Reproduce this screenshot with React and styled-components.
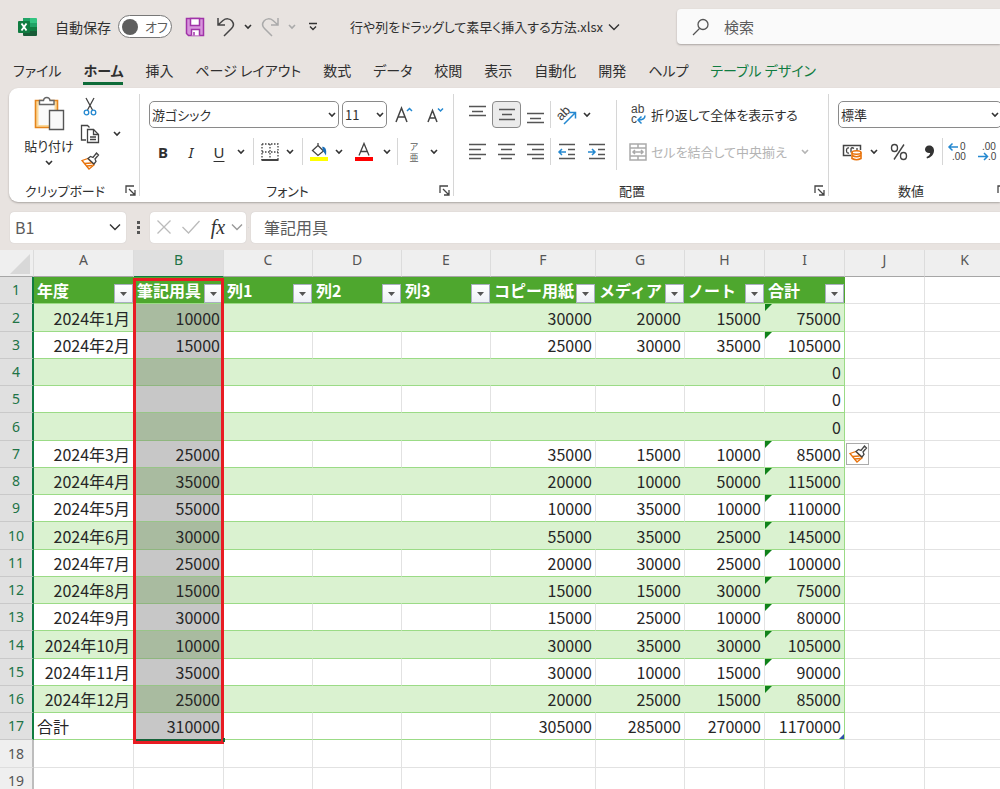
import React from "react";
import styled, { createGlobalStyle, css } from "styled-components";

const Colors = {
  chrome: "#e8e3e0",
  ink: "#303030",
  muted: "#5c5c5c",
  faint: "#b4b4b4",
  line: "#d6d6d6",
  excel: "#107c41",
  blue: "#2488d0",
  orange: "#e8730c",
  header: "#4ea72e",
  band: "#daf2d0",
  bandLine: "#9bdb86",
};

const GlobalStyle = createGlobalStyle`
  * {
    box-sizing: border-box;
  }

  body {
    margin: 0;
    background: ${Colors.chrome};
    color: ${Colors.ink};
    font-family: "Noto Sans CJK JP", sans-serif;
    font-size: 13px;
    overflow: hidden;
  }

  button, input, select {
    font: inherit;
    color: inherit;
    font-feature-settings: inherit;
  }

  svg {
    display: block;
    flex-shrink: 0;
    overflow: visible;
  }
`;

const Page = styled.div`
  height: 100vh;
  display: flex;
  flex-direction: column;
  overflow: hidden;
`;

/* ---------- title bar ---------- */

const TitleBar = styled.header`
  height: 53px;
  flex-shrink: 0;
  display: flex;
  align-items: center;
  padding-left: 18px;
  font-feature-settings: "palt";
`;

const AutoSave = styled.label`
  display: flex;
  align-items: center;
  gap: 7px;
  margin-left: 17px;
  font-size: 14px;
`;

const Toggle = styled.span`
  width: 54px;
  height: 23px;
  display: flex;
  align-items: center;
  gap: 7px;
  padding-left: 3px;
  border: 1px solid #777;
  border-radius: 12px;
  background: #fff;
  color: ${Colors.muted};
  font-size: 13px;
`;

const ToggleInput = styled.input`
  appearance: none;
  width: 16px;
  height: 16px;
  margin: 0;
  border-radius: 50%;
  background: #5e5e5e;
`;

const PlainButton = styled.button`
  display: inline-flex;
  align-items: center;
  justify-content: center;
  flex-shrink: 0;
  width: ${(props) => (props.$w ? `${props.$w}px` : "auto")};
  height: ${(props) => props.$h || 26}px;
  padding: 0;
  border: 0;
  border-radius: 4px;
  background: transparent;
  color: ${(props) => props.$color || "inherit"};
  white-space: nowrap;

  ${(props) => props.$active && css`
    border: 1px solid #8a8a8a;
    background: #ebebeb;
  `}
`;

const QuickTools = styled.div`
  display: flex;
  align-items: center;
  margin-left: 10px;
`;

const FileName = styled.button`
  display: flex;
  align-items: center;
  gap: 5px;
  margin-left: 20px;
  padding: 0;
  border: 0;
  background: transparent;
  font-size: 13px;
  white-space: nowrap;
`;

const SearchBox = styled.label`
  flex: 1;
  display: flex;
  align-items: center;
  gap: 14px;
  height: 35px;
  margin-left: 57px;
  padding-left: 15px;
  border-radius: 4px 0 0 4px;
  background: #fafafa;
  box-shadow: 0 1px 2px #aaa5a2;
`;

const BareInput = styled.input`
  flex: 1;
  min-width: 0;
  padding: 0;
  border: 0;
  outline: 0;
  background: transparent;
  font-size: ${(props) => props.$size || 15}px;
  color: ${Colors.muted};

  &::placeholder {
    color: ${Colors.muted};
    opacity: 1;
  }
`;

/* ---------- tabs ---------- */

const Tabs = styled.nav`
  height: 35px;
  flex-shrink: 0;
  display: flex;
  align-items: flex-start;
  gap: 22px;
  padding-left: 13px;
  font-feature-settings: "palt";
`;

const Tab = styled.button`
  height: 32px;
  padding: 5px 0 0;
  border: 0;
  border-bottom: 3px solid ${(props) => (props.$active ? "#0e6b38" : "transparent")};
  background: transparent;
  font-size: 14px;
  font-weight: ${(props) => (props.$active ? 700 : 400)};
  color: ${(props) => (props.$accent ? Colors.excel : Colors.ink)};
  white-space: nowrap;
`;

/* ---------- ribbon ---------- */

const Ribbon = styled.section`
  height: 114px;
  flex-shrink: 0;
  display: flex;
  margin-left: 9px;
  border-radius: 9px 0 0 9px;
  background: #fff;
  box-shadow: 0 1px 2px #a9a4a1;
  overflow: hidden;
  font-feature-settings: "palt";
`;

const Group = styled.div`
  width: ${(props) => props.$w}px;
  flex-shrink: 0;
  display: flex;
  flex-direction: column;
  padding: 6px 0 2px;
`;

const GroupBody = styled.div`
  flex: 1;
  display: flex;
  padding: 0 0 0 ${(props) => props.$pad || 9}px;
`;

const GroupFooter = styled.div`
  height: 20px;
  display: flex;
  align-items: center;

  & > span {
    flex: 1;
    text-align: center;
  }
`;

const Divider = styled.span`
  width: 1px;
  height: ${(props) => (props.$h ? `${props.$h}px` : "auto")};
  margin: ${(props) => props.$m || "0"};
  background: ${Colors.line};
  flex-shrink: 0;
`;

const Stack = styled.div`
  display: flex;
  flex-direction: column;
  gap: ${(props) => props.$gap || 0}px;
  padding-top: ${(props) => props.$top || 0}px;
`;

const Line = styled.div`
  display: flex;
  align-items: center;
  height: 27px;
  gap: ${(props) => props.$gap || 0}px;
`;

const PasteButton = styled.button`
  display: flex;
  flex-direction: column;
  align-items: center;
  gap: 4px;
  width: 54px;
  height: 78px;
  padding: 2px 0 0;
  border: 0;
  background: transparent;
  line-height: 20px;
`;

const SelectBox = styled.span`
  display: grid;
  align-items: center;
  width: ${(props) => props.$w}px;
  flex-shrink: 0;

  & > * {
    grid-area: 1 / 1;
  }

  & > svg {
    justify-self: end;
    margin-right: 3px;
    pointer-events: none;
  }
`;

const Select = styled.select`
  appearance: none;
  width: 100%;
  height: 27px;
  padding: 0 2px;
  border: 1px solid #8a8a8a;
  border-radius: 5px;
  background: #fff;
  font-size: 13px;
`;

const TextTool = styled.button`
  display: flex;
  align-items: center;
  gap: 4px;
  height: 27px;
  padding: 0;
  border: 0;
  background: transparent;
  color: ${(props) => (props.$off ? Colors.faint : "inherit")};
  white-space: nowrap;
`;

const Letter = styled.span`
  font-family: "Noto Sans", sans-serif;
  font-size: 15px;
  line-height: 20px;
  font-weight: ${(props) => (props.$bold ? 700 : 400)};
  font-style: ${(props) => (props.$italic ? "italic" : "normal")};
  text-decoration: ${(props) => (props.$underline ? "underline" : "none")};
  text-underline-offset: 3px;
`;

const Ruby = styled.span`
  display: flex;
  flex-direction: column;
  align-items: center;
  font-size: 9px;
  line-height: 11px;
  color: ${Colors.muted};
`;

/* ---------- formula bar ---------- */

const FormulaBar = styled.div`
  height: 48px;
  flex-shrink: 0;
  display: flex;
  align-items: center;
  padding: 2px 0 0 10px;
`;

const WhiteBox = styled.div`
  display: flex;
  align-items: center;
  width: ${(props) => (props.$w ? `${props.$w}px` : "auto")};
  flex: ${(props) => (props.$w ? "none" : 1)};
  height: 31px;
  padding: 0 ${(props) => props.$pad || 4}px;
  border-radius: ${(props) => (props.$w ? "4px" : "4px 0 0 4px")};
  background: #fff;
  box-shadow: 0 0 1px #b9b4b1;
`;

const Dots = styled.span`
  width: 24px;
  display: flex;
  flex-direction: column;
  align-items: center;
  gap: 2px;

  & > i {
    width: 3px;
    height: 3px;
    background: #555;
  }
`;

/* ---------- sheet ---------- */

const Sheet = styled.main`
  position: relative;
  flex: 1;
  min-height: 0;
  overflow: hidden;
  background: #fff;
`;

const Table = styled.table`
  width: 100%;
  table-layout: fixed;
  border-collapse: separate;
  border-spacing: 0;
  font-size: 16px;
  line-height: 22px;

  th, td {
    padding: 0;
    overflow: hidden;
    white-space: nowrap;
  }
`;

const ColHead = styled.th`
  height: 27px;
  border-right: 1px solid #dcdcdc;
  border-bottom: 1px solid ${(props) => (props.$on ? Colors.excel : "#a6a6a6")};
  background: ${(props) => (props.$on ? "#dfdfdf" : "#efefef")};
  color: ${(props) => (props.$on ? "#217346" : "#555")};
  font-family: "Noto Sans", sans-serif;
  font-size: 14px;
  font-weight: 400;
  line-height: 20px;
  vertical-align: top;
`;

const Row = styled.tr`
  height: 27px;

  &:nth-child(4n + 2) {
    height: 28px;
  }
`;

const RowHead = styled.th`
  border-right: 2px solid ${(props) => (props.$on ? Colors.excel : "#bdbdbd")};
  border-bottom: 1px solid ${(props) => (props.$on ? "#c9c9c9" : "#dedede")};
  background: ${(props) => (props.$on ? "#e0e0e0" : "#efefef")};
  color: ${(props) => (props.$on ? "#217346" : "#555")};
  font-family: "Noto Sans", sans-serif;
  font-size: 14px;
  font-weight: 400;
`;

const HeadCell = styled.th`
  background: ${Colors.header};
  border-bottom: 1px solid ${Colors.bandLine};
  color: #fff;
  font-weight: 700;
`;

const HeadInner = styled.div`
  display: flex;
  justify-content: space-between;
  align-items: flex-end;
  height: 26px;
  padding: 0 1px 0 3px;

  & > span {
    align-self: flex-start;
    line-height: 26px;
  }
`;

const FilterButton = styled.button`
  flex-shrink: 0;
  display: flex;
  align-items: center;
  justify-content: center;
  width: 19px;
  height: 19px;
  padding: 0;
  border: 1px solid #a9afbf;
  background: linear-gradient(#fff, #eef0f6);
`;

const Cell = styled.td`
  position: relative;
  text-align: ${(props) => (props.$left ? "left" : "right")};
  color: #262626;
  border-right: 1px solid #e2e2e2;
  border-bottom: 1px solid #e2e2e2;

  & > span {
    padding: 0 3px;
  }

  ${(props) => props.$table && css`
    border-bottom-color: ${Colors.bandLine};
  `}

  ${(props) => props.$band && css`
    background: ${Colors.band};
    border-right-color: ${Colors.band};
  `}

  ${(props) => props.$last && css`
    border-right-color: ${Colors.bandLine};
  `}

  ${(props) => props.$selected && css`
    background: ${props.$band ? "#a9bba0" : "#c7c7c7"};
    border-bottom-color: ${props.$band ? "#8fb67f" : "#98c488"};
  `}

  ${(props) => props.$flag && css`
    &::before {
      content: "";
      position: absolute;
      top: 0;
      left: 0;
      border-top: 7px solid #10821a;
      border-right: 7px solid transparent;
    }
  `}

  ${(props) => props.$corner && css`
    &::after {
      content: "";
      position: absolute;
      right: 0;
      bottom: 0;
      border-bottom: 5px solid #2f4fa8;
      border-left: 5px solid transparent;
    }
  `}
`;

const PasteOptions = styled.button`
  display: flex;
  align-items: center;
  justify-content: center;
  width: 23px;
  height: 22px;
  margin-left: 1px;
  padding: 0;
  border: 1px solid #ababab;
  background: #fff;
`;

/* frame laid over column B, rows 1 to 17 */
const Highlight = styled.div`
  position: absolute;
  left: 133px;
  top: 28px;
  width: 91px;
  height: 466px;
  border: 3px solid #e81c23;
  box-shadow: inset 0 -2px 0 #17633a;
  pointer-events: none;

  &::after {
    content: "";
    position: absolute;
    right: -4px;
    bottom: -1px;
    width: 2px;
    height: 4px;
    background: #17633a;
  }
`;

/* ---------- icons ---------- */

function Svg({ w = 20, h = 20, color = "#444", sw = 1.3, children }) {
  return (
    <svg width={w} height={h} viewBox={`0 0 ${w} ${h}`} fill="none" stroke={color} strokeWidth={sw} aria-hidden="true">
      {children}
    </svg>
  );
}

const Glyphs = styled.text`
  fill: #444;
  stroke: none;
  font-family: "Liberation Sans", sans-serif;
  font-size: ${(props) => props.$size}px;
`;

const Chevron = ({ color = "#333", big }) =>
  big ? (
    <Svg w={12} h={8} color={color} sw={1.4}><path d="M1 1.5l5 5 5-5" /></Svg>
  ) : (
    <Svg w={8} h={6} color={color} sw={1.6}><path d="M1 1l3 3 3-3" /></Svg>
  );

const ExcelIcon = () => (
  <Svg w={20} h={20} sw={0}>
    <path d="M5 1h7v5H5z" fill="#21a366" />
    <path d="M12 1h6q1 0 1 1v4h-7z" fill="#33c481" />
    <path d="M5 6h7v8H5z" fill="#107c41" />
    <path d="M12 6h7v4h-7z" fill="#21a366" />
    <path d="M12 10h7v4h-7z" fill="#107c41" />
    <path d="M5 14h14v4q0 1-1 1H6q-1 0-1-1z" fill="#185c37" />
    <rect x="0" y="4" width="12" height="12" rx="1" fill="#107c41" />
    <path d="M3.500 6.500l5 7M8.500 6.500l-5 7" stroke="#fff" strokeWidth="1.900" />
  </Svg>
);

const SaveIcon = () => (
  <Svg w={20} h={20} color="#a033a8" sw={1.5}>
    <path d="M1.500 1.500h17v17h-15l-2-2z" fill="#d795dc" />
    <path d="M5.500 1.500h9v7h-9z" fill="#fff" />
    <path d="M6.500 18.500v-6h8v6" fill="#fff" />
    <path d="M9 15v3.500" />
  </Svg>
);

const UndoIcon = () => (
  <Svg w={20} h={20} color="#444" sw={1.5}>
    <path d="M2 1v7h7M2.500 7.500L7 3.500c3-2.500 7-2 9 .5s1.500 5.500-.5 7.500L8 19" />
  </Svg>
);

const RedoIcon = () => (
  <Svg w={20} h={20} color="#aaa" sw={1.5}>
    <path d="M18 1v7h-7M17.500 7.500L13 3.500c-3-2.500-7-2-9 .5s-1.500 5.500.5 7.500L12 19" />
  </Svg>
);

const MoreIcon = () => (
  <Svg w={10} h={10} color="#333" sw={1.4}><path d="M1 1.500h8M2 4.500l3 3 3-3" /></Svg>
);

const SearchIcon = () => (
  <Svg w={18} h={18} color="#555" sw={1.3}>
    <circle cx="11" cy="6.500" r="5" /><path d="M7.500 10.500L1 17" />
  </Svg>
);

const LaunchIcon = () => (
  <Svg w={11} h={11} color="#444" sw={1.3}>
    <path d="M1 8V1h8M4 4l5.500 5.500M10 5v5H5" />
  </Svg>
);

const PasteIcon = () => (
  <Svg w={32} h={36} sw={1.4}>
    <path d="M2.500 4.500h22v27h-22z" stroke="#e5851c" strokeWidth="1.600" fill="#fbd99a" />
    <path d="M5.500 8h16v21h-16z" fill="#fafafa" stroke="none" />
    <path d="M6.500 8.500v-4h4c.5-4 6-4 6.500 0h4v4z" fill="#fff" stroke="#666" />
    <path d="M16.500 14.500h14v19h-14z" fill="#f8f8f8" stroke="#555" />
  </Svg>
);

const CutIcon = () => (
  <Svg w={14} h={18}>
    <path d="M3 0l6.500 12M11 0L4.500 12" />
    <circle cx="3.500" cy="14.500" r="2.300" stroke={Colors.blue} />
    <circle cx="10.500" cy="14.500" r="2.300" stroke={Colors.blue} />
  </Svg>
);

const CopyIcon = () => (
  <Svg w={20} h={20}>
    <path d="M6 16H1.500V1.500h6l2 2" />
    <path d="M7.500 5.500h6l5 5v8h-11z" fill="#fff" />
    <path d="M13.500 5.500v5h5M10 13h6M10 15.500h6" />
  </Svg>
);

const BrushIcon = () => (
  <Svg w={18} h={18}>
    <path d="M1 8.500l6-2 6 6.500-5 4z" stroke={Colors.orange} fill="#fff" />
    <path d="M3.500 11.500l7-.5M5.500 14l6-.5" stroke={Colors.orange} />
    <path d="M7 6.500l2.500-2 2.500 1L15.500 1l2 2L14 7l1 2.500-2 2.500z" fill="#fff" />
  </Svg>
);

const BordersIcon = () => (
  <Svg w={18} h={18}>
    <path d="M1 1h16v16M1 1v16M9 1v16M1 9h16" strokeDasharray="1.500 1.500" />
    <path d="M.5 17h17" strokeWidth="2" />
  </Svg>
);

const FillIcon = () => (
  <Svg w={20} h={20}>
    <path d="M8.500 3l6 6-5.500 4.500L3.500 8.500 9 3.500V1" />
    <path d="M14 5.500q3 .5 2.500 6l-2-3z" fill="#1b6fb8" stroke="#1b6fb8" />
    <path d="M1 15h18v4H1z" fill="#ff0" stroke="none" />
  </Svg>
);

const FontColorIcon = () => (
  <Svg w={20} h={20}>
    <path d="M5 13.500l5-12 5 12M6.500 9.500h7" />
    <path d="M1 15h18v4H1z" fill="#f00" stroke="none" />
  </Svg>
);

const GrowIcon = () => (
  <Svg w={18} h={18} sw={1.5}>
    <path d="M1 16L6.500 2 12 16M3 11h7" /><path d="M12 5l2.500-2.500L17 5" stroke={Colors.blue} />
  </Svg>
);

const ShrinkIcon = () => (
  <Svg w={18} h={18} sw={1.5}>
    <path d="M2 16L6.500 4.500 11 16M4 12h5" /><path d="M12 2.500L14.500 5 17 2.500" stroke={Colors.blue} />
  </Svg>
);

// each line is [x1, x2, y]
const LinesIcon = ({ lines, children }) => (
  <Svg w={18} h={18} color="#555" sw={1.5}>
    {lines.map(([a, b, y]) => <path key={y} d={`M${a} ${y}.500H${b}`} />)}
    {children}
  </Svg>
);

const OrientIcon = () => (
  <Svg w={20} h={20}>
    <Glyphs x="0" y="13" transform="rotate(-45 6 10)" $size={13}>ab</Glyphs>
    <path d="M7 19L18 8M12.500 7.500H18.500V13.500" stroke={Colors.blue} strokeWidth="1.500" />
  </Svg>
);

const WrapIcon = () => (
  <Svg w={18} h={20}>
    <Glyphs x="2" y="8" $size={12}>ab</Glyphs>
    <Glyphs x="2" y="18" $size={12}>c</Glyphs>
    <path d="M16 10.500q0 4.500-7 4.500M12.500 11.500L9 15l3.500 3.500" stroke={Colors.blue} strokeWidth="1.500" />
  </Svg>
);

const MergeIcon = () => (
  <Svg w={18} h={18} color="#aaa" sw={1.5}>
    <path d="M1 1h16v16H1zM1 5h16M1 13h16M9 1v4M9 13v4M4 9h10M6 7L4 9l2 2M12 7l2 2-2 2" />
  </Svg>
);

const CurrencyIcon = () => (
  <Svg w={20} h={18}>
    <path d="M9 12.500H1.500v-10h17V7" strokeWidth="1.500" />
    <path d="M7 5q-2.500-.5-2.500 2.500T7 10M12 5.500q-2-1.500-3 0v4M15 8V5" />
    <path d="M10 9.500v6q4.500 2.500 9 0v-6" fill="#fff" stroke={Colors.orange} strokeWidth="1.600" />
    <ellipse cx="14.500" cy="9.500" rx="4.500" ry="1.700" fill="#fff" stroke={Colors.orange} strokeWidth="1.600" />
    <path d="M10 12.500q4.500 2.500 9 0" stroke={Colors.orange} strokeWidth="1.600" />
  </Svg>
);

const PercentIcon = () => (
  <Svg w={18} h={18} sw={1.4}>
    <ellipse cx="4.500" cy="5" rx="3" ry="3.500" /><ellipse cx="13.500" cy="13" rx="3" ry="3.500" />
    <path d="M14 1.500L4 16.500" />
  </Svg>
);

const CommaIcon = () => (
  <Svg w={12} h={18} sw={0}>
    <path d="M6 2.500c3 0 5 2 5 5 0 4-3 7-7 8l-.5-1.500c2-.7 3.500-2 3.700-4C4.500 10.500 2 9 2 6.500c0-2.300 1.700-4 4-4z" fill="#333" />
  </Svg>
);

const DecimalIcon = ({ less }) => (
  <Svg w={20} h={20}>
    <Glyphs x={less ? 4 : 12} y="8" $size={10}>{less ? ".00" : "0"}</Glyphs>
    <Glyphs x={less ? 10 : 4} y="18" $size={10}>{less ? ".0" : ".00"}</Glyphs>
    <path
      d={less ? "M0 14.500h9.500M6 11l3.500 3.500L6 18" : "M10 5H1M4.500 1.500L1 5l3.500 3.500"}
      stroke={Colors.blue}
      strokeWidth="1.500"
    />
  </Svg>
);

const FxText = styled.span`
  font-family: "Liberation Serif", serif;
  font-size: 20px;
  font-style: italic;
  line-height: 24px;
  color: #333;
`;

/* ---------- data ---------- */

const tabs = ["ファイル", "ホーム", "挿入", "ページ レイアウト", "数式", "データ", "校閲", "表示", "自動化", "開発", "ヘルプ", "テーブル デザイン"];

const columns = [
  ["A", 100, "年度"],
  ["B", 90, "筆記用具"],
  ["C", 89, "列1"],
  ["D", 89, "列2"],
  ["E", 89, "列3"],
  ["F", 105, "コピー用紙"],
  ["G", 89, "メディア"],
  ["H", 80, "ノート"],
  ["I", 80, "合計"],
  ["J", 80],
  ["K", 80],
];

const entry = (label, b, f, g, h, total) => [label, b, "", "", "", f, g, h, total];
const empty = entry("", "", "", "", "", 0);

const rows = [
  entry("2024年1月", 10000, 30000, 20000, 15000, 75000),
  entry("2024年2月", 15000, 25000, 30000, 35000, 105000),
  empty,
  empty,
  empty,
  entry("2024年3月", 25000, 35000, 15000, 10000, 85000),
  entry("2024年4月", 35000, 20000, 10000, 50000, 115000),
  entry("2024年5月", 55000, 10000, 35000, 10000, 110000),
  entry("2024年6月", 30000, 55000, 35000, 25000, 145000),
  entry("2024年7月", 25000, 20000, 30000, 25000, 100000),
  entry("2024年8月", 15000, 15000, 15000, 30000, 75000),
  entry("2024年9月", 30000, 15000, 25000, 10000, 80000),
  entry("2024年10月", 10000, 30000, 35000, 30000, 105000),
  entry("2024年11月", 35000, 30000, 10000, 15000, 90000),
  entry("2024年12月", 25000, 20000, 25000, 15000, 85000),
  entry("合計", 310000, 305000, 285000, 270000, 1170000),
];

/* ---------- parts ---------- */

function Tool({ label, children, ...rest }) {
  return <PlainButton type="button" aria-label={label} {...rest}>{children}</PlainButton>;
}

function More({ label, w = 16, color }) {
  return <Tool label={label} $w={w}><Chevron color={color} /></Tool>;
}

function Dropdown({ label, value, w }) {
  return (
    <SelectBox $w={w}>
      <Select aria-label={label} defaultValue={value}>
        <option>{value}</option>
      </Select>
      <Chevron />
    </SelectBox>
  );
}

function Footer({ title }) {
  return (
    <GroupFooter>
      <span>{title}</span>
      <Tool label={`${title}の設定`} $w={18} $h={18}><LaunchIcon /></Tool>
    </GroupFooter>
  );
}

function TopBar() {
  return (
    <TitleBar>
      <ExcelIcon />
      <AutoSave>
        自動保存
        <Toggle>
          <ToggleInput type="checkbox" role="switch" />
          オフ
        </Toggle>
      </AutoSave>
      <QuickTools>
        <Tool label="上書き保存" $w={26}><SaveIcon /></Tool>
        <Tool label="元に戻す" $w={36}><UndoIcon /></Tool>
        <More label="元に戻す履歴" w={8} />
        <Tool label="やり直し" $w={36}><RedoIcon /></Tool>
        <More label="やり直し履歴" w={8} color="#aaa" />
        <Tool label="クイック アクセスのカスタマイズ" $w={34}><MoreIcon /></Tool>
      </QuickTools>
      <FileName type="button">
        行や列をドラッグして素早く挿入する方法.xlsx
        <Chevron big />
      </FileName>
      <SearchBox>
        <SearchIcon />
        <BareInput type="text" placeholder="検索" aria-label="検索" />
      </SearchBox>
    </TitleBar>
  );
}

function ClipboardGroup() {
  return (
    <Group $w={130}>
      <GroupBody $pad={13}>
        <PasteButton type="button">
          <PasteIcon />
          貼り付け
          <Chevron />
        </PasteButton>
        <Stack>
          <Tool label="切り取り" $w={28} $h={26}><CutIcon /></Tool>
          <Line>
            <Tool label="コピー" $w={28}><CopyIcon /></Tool>
            <More label="コピーのオプション" w={26} />
          </Line>
          <Tool label="書式のコピー" $w={28} $h={28}><BrushIcon /></Tool>
        </Stack>
      </GroupBody>
      <Footer title="クリップボード" />
    </Group>
  );
}

function FontGroup() {
  return (
    <Group $w={313}>
      <GroupBody>
        <Stack $gap={10} $top={7}>
          <Line $gap={3}>
            <Dropdown label="フォント" value="游ゴシック" w={190} />
            <Dropdown label="フォント サイズ" value="11" w={45} />
            <Tool label="フォント サイズの拡大" $w={28}><GrowIcon /></Tool>
            <Tool label="フォント サイズの縮小" $w={28}><ShrinkIcon /></Tool>
          </Line>
          <Line>
            <Tool label="太字" $w={28}><Letter $bold>B</Letter></Tool>
            <Tool label="斜体" $w={28}><Letter $italic>I</Letter></Tool>
            <Tool label="下線" $w={28}><Letter $underline>U</Letter></Tool>
            <More label="下線のオプション" />
            <Divider $h={27} $m="0 4px" />
            <Tool label="罫線" $w={24}><BordersIcon /></Tool>
            <More label="罫線のオプション" />
            <Divider $h={27} $m="0 4px" />
            <Tool label="塗りつぶしの色" $w={24}><FillIcon /></Tool>
            <More label="塗りつぶしのオプション" />
            <Tool label="フォントの色" $w={34}><FontColorIcon /></Tool>
            <More label="フォントの色のオプション" w={12} />
            <Divider $h={27} $m="0 4px" />
            <Tool label="ふりがな" $w={24}><Ruby><span>ア</span><span>亜</span></Ruby></Tool>
            <More label="ふりがなのオプション" />
          </Line>
        </Stack>
      </GroupBody>
      <Footer title="フォント" />
    </Group>
  );
}

function AlignGroup() {
  return (
    <Group $w={374}>
      <GroupBody>
        <Stack $gap={10} $top={7}>
          <Line>
            <Tool label="上揃え" $w={29}><LinesIcon lines={[[0, 17, 0], [3, 14, 5], [0, 17, 9]]} /></Tool>
            <Tool label="上下中央揃え" $w={29} $h={27} $active><LinesIcon lines={[[1, 17, 3], [4, 14, 8], [1, 17, 13]]} /></Tool>
            <Tool label="下揃え" $w={29}><LinesIcon lines={[[0, 17, 7], [3, 14, 12], [0, 17, 16]]} /></Tool>
            <Divider $h={27} />
            <Tool label="方向" $w={32}><OrientIcon /></Tool>
            <More label="方向のオプション" w={8} />
          </Line>
          <Line>
            <Tool label="左揃え" $w={29}><LinesIcon lines={[[0, 17, 1], [0, 12, 6], [0, 17, 11], [0, 12, 15]]} /></Tool>
            <Tool label="中央揃え" $w={29}><LinesIcon lines={[[0, 17, 1], [3, 14, 6], [0, 17, 11], [3, 14, 15]]} /></Tool>
            <Tool label="右揃え" $w={29}><LinesIcon lines={[[0, 17, 1], [5, 17, 6], [0, 17, 11], [5, 17, 15]]} /></Tool>
            <Divider $h={27} />
            <Tool label="インデントを減らす" $w={32}>
              <LinesIcon lines={[[1, 17, 1], [10, 17, 6], [10, 17, 11], [1, 17, 15]]}>
                <path d="M8 9H1.500M4 6L1 9l3 3" stroke={Colors.blue} />
              </LinesIcon>
            </Tool>
            <Tool label="インデントを増やす" $w={28}>
              <LinesIcon lines={[[1, 17, 1], [10, 17, 6], [10, 17, 11], [1, 17, 15]]}>
                <path d="M0 9h7M4 6l3 3-3 3" stroke={Colors.blue} />
              </LinesIcon>
            </Tool>
          </Line>
        </Stack>
        <Divider $h={70} $m="6px 12px 0 5px" />
        <Stack $gap={10} $top={7}>
          <TextTool type="button"><WrapIcon />折り返して全体を表示する</TextTool>
          <Line $gap={10}>
            <TextTool type="button" $off><MergeIcon />セルを結合して中央揃え</TextTool>
            <More label="結合のオプション" color={Colors.faint} />
          </Line>
        </Stack>
      </GroupBody>
      <Footer title="配置" />
    </Group>
  );
}

function NumberGroup() {
  return (
    <Group $w={182}>
      <GroupBody>
        <Stack $gap={10} $top={7}>
          <Dropdown label="表示形式" value="標準" w={164} />
          <Line>
            <Tool label="通貨表示形式" $w={28}><CurrencyIcon /></Tool>
            <More label="通貨のオプション" />
            <Tool label="パーセント" $w={34}><PercentIcon /></Tool>
            <Tool label="桁区切り" $w={26}><CommaIcon /></Tool>
            <Divider $h={27} />
            <Tool label="小数点以下を増やす" $w={30}><DecimalIcon /></Tool>
            <Tool label="小数点以下を減らす" $w={30}><DecimalIcon less /></Tool>
          </Line>
        </Stack>
      </GroupBody>
      <Footer title="数値" />
    </Group>
  );
}

function Formula() {
  return (
    <FormulaBar>
      <WhiteBox $w={116} $pad={5}>
        <BareInput aria-label="名前ボックス" defaultValue="B1" $size={16} />
        <Chevron big />
      </WhiteBox>
      <Dots><i /><i /><i /></Dots>
      <WhiteBox $w={96} $pad={2}>
        <Tool label="キャンセル" $w={24}><Svg w={16} h={16} color="#bbb"><path d="M1.500 1.500l13 13M14.500 1.500l-13 13" /></Svg></Tool>
        <Tool label="入力" $w={30}><Svg w={20} h={16} color="#bbb"><path d="M1.500 8l6 6L18.500 2" /></Svg></Tool>
        <Tool label="関数の挿入" $w={24}><FxText>fx</FxText></Tool>
        <Tool label="関数のオプション" $w={14}><Chevron big color="#999" /></Tool>
      </WhiteBox>
      <Divider $h={1} $m="0 2px" />
      <WhiteBox $pad={13}>
        <BareInput aria-label="数式バー" defaultValue="筆記用具" $size={16} />
      </WhiteBox>
    </FormulaBar>
  );
}

function BodyRow({ number, values }) {
  const inTable = Boolean(values);
  const band = inTable && number % 2 === 0;
  return (
    <Row>
      <RowHead scope="row" $on={inTable}>{number}</RowHead>
      {columns.map(([letter], i) => {
        const cellInTable = inTable && i < 9;
        const value = cellInTable ? values[i] : "";
        return (
          <Cell
            key={letter}
            $table={cellInTable}
            $band={band && cellInTable}
            $last={cellInTable && i === 8}
            $selected={inTable && letter === "B"}
            $flag={letter === "I" && value > 0 && number !== 17}
            $corner={letter === "I" && number === 17}
            $left={value === "合計"}
          >
            {value !== "" && <span>{value}</span>}
            {number === 7 && letter === "J" && (
              <PasteOptions type="button" aria-label="挿入オプション"><BrushIcon /></PasteOptions>
            )}
          </Cell>
        );
      })}
    </Row>
  );
}

function Spreadsheet() {
  return (
    <Sheet>
      <Table>
        <colgroup>
          <col style={{ width: 34 }} />
          {columns.map(([letter, width]) => <col key={letter} style={{ width }} />)}
        </colgroup>
        <thead>
          <tr>
            <ColHead aria-label="すべて選択">
              <Svg w={30} h={24} sw={0}><path d="M30 4v20H10z" fill="#d8d8d8" /></Svg>
            </ColHead>
            {columns.map(([letter]) => <ColHead key={letter} scope="col" $on={letter === "B"}>{letter}</ColHead>)}
          </tr>
        </thead>
        <tbody>
          <Row>
            <RowHead scope="row" $on>1</RowHead>
            {columns.map(([letter, , title]) =>
              title ? (
                <HeadCell key={letter}>
                  <HeadInner>
                    <span>{title}</span>
                    <FilterButton type="button" aria-label={`${title}のフィルター`}>
                      <Svg w={7} h={4} sw={0}><path d="M0 0h7L3.500 4z" fill="#555" /></Svg>
                    </FilterButton>
                  </HeadInner>
                </HeadCell>
              ) : (
                <Cell key={letter} />
              )
            )}
          </Row>
          {rows.map((values, i) => <BodyRow key={i} number={i + 2} values={values} />)}
          <BodyRow number={18} />
          <BodyRow number={19} />
        </tbody>
      </Table>
      <Highlight />
    </Sheet>
  );
}

export default function App() {
  return (
    <Page>
      <GlobalStyle />
      <TopBar />
      <Tabs>
        {tabs.map((name) => (
          <Tab key={name} type="button" $active={name === "ホーム"} $accent={name === "テーブル デザイン"}>{name}</Tab>
        ))}
      </Tabs>
      <Ribbon>
        <ClipboardGroup />
        <Divider $m="6px 0" />
        <FontGroup />
        <Divider $m="6px 0" />
        <AlignGroup />
        <Divider $m="6px 0" />
        <NumberGroup />
      </Ribbon>
      <Formula />
      <Spreadsheet />
    </Page>
  );
}
